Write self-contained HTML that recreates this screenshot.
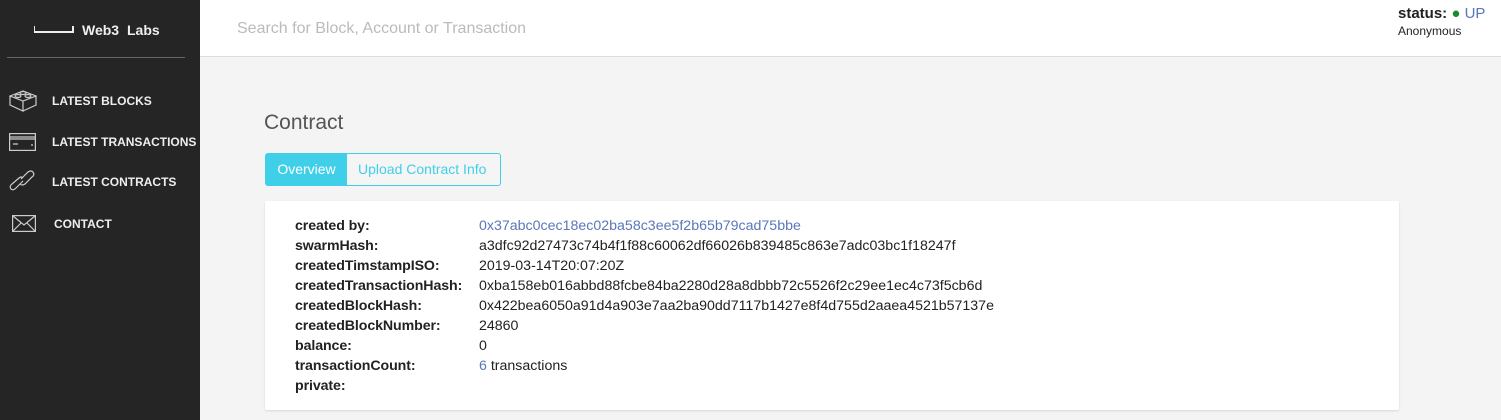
<!DOCTYPE html>
<html><head><style>
*{margin:0;padding:0;box-sizing:border-box}
body{width:1501px;height:420px;overflow:hidden;background:#f4f4f4;font-family:"Liberation Sans",sans-serif;position:relative}
#side{position:absolute;left:0;top:0;width:200px;height:420px;background:#252525;color:#fff}
#logo{position:absolute;left:82px;top:22px;font-weight:bold;font-size:14px;color:#eee;word-spacing:4px}
#logoline{position:absolute;left:34px;top:26px;width:40px;height:7px;border:2px solid #eee;border-top:none;border-left:1px solid #eee}
#hr{position:absolute;left:7px;top:57px;width:178px;height:1px;background:#666}
.nav{position:absolute;left:52px;font-size:12px;font-weight:bold;color:#eee}
.ic{position:absolute;left:9px}
#head{position:absolute;left:200px;top:0;right:0;height:57px;background:#fff;border-bottom:1px solid #ddd}
#search{position:absolute;left:37px;top:20px;font-size:16px;color:#bbb}
#status{position:absolute;left:1398px;top:5px;font-size:15px;font-weight:bold;color:#222}
#anon{position:absolute;left:1398px;top:24px;font-size:12px;color:#222}
h1{position:absolute;left:264px;top:111px;font-size:21px;font-weight:normal;color:#555}
#tabs{position:absolute;left:265px;top:153px;height:33px;width:236px;border:1px solid #40cfe9;border-radius:3px;background:#f5f5f5;font-size:14px}
#tabs .a{position:absolute;left:0;top:0;width:81px;height:31px;background:#40cfe9;color:#fff;line-height:31px;text-align:center}
#tabs .b{position:absolute;left:92px;top:0;line-height:31px;color:#40cfe9}
#card{position:absolute;left:265px;top:201px;width:1134px;height:209px;background:#fff;box-shadow:0 1px 2px rgba(0,0,0,.12);border-radius:2px}
.r{position:absolute;font-size:14.2px;line-height:17px;color:#222;white-space:nowrap}
.l{left:30px;font-weight:bold;letter-spacing:-0.1px}
.v{left:214px}
a{color:#5a77b8;text-decoration:none}
</style></head><body>
<div id="side">
<div id="logoline"></div><div id="logo">Web3 Labs</div>
<div id="hr"></div>
<svg class="ic" style="top:88px" width="28" height="24" viewBox="0 0 28 24" fill="none" stroke="#ccc" stroke-width="1.2"><path d="M1 8 L14 3 L27 8 L14 13 Z M1 8 V17 L14 23 V13 M27 8 V17 L14 23"/><ellipse cx="14" cy="5" rx="3" ry="1.5"/><ellipse cx="9" cy="8" rx="3" ry="1.5"/><ellipse cx="19" cy="8" rx="3" ry="1.5"/></svg>
<div class="nav" style="top:94px">LATEST BLOCKS</div>
<svg class="ic" style="top:133px" width="27" height="18" viewBox="0 0 27 18" fill="none" stroke="#ccc" stroke-width="1.2"><rect x="0.6" y="0.6" width="25.8" height="16.8"/><path d="M1 4H26M1 6H26M4 11H9M22 12H24"/></svg>
<div class="nav" style="top:135px">LATEST TRANSACTIONS</div>
<svg class="ic" style="top:170px" width="26" height="24" viewBox="0 0 26 24" fill="none" stroke="#ccc" stroke-width="1.2"><path d="M12 9 L19 2 Q22 0 24 2 Q26 5 23 7 L16 14 Q13 16 11 14 M14 11 L7 18 Q4 21 2 19 Q0 16 3 14 L10 8 Q12 6 14 8"/></svg>
<div class="nav" style="top:175px">LATEST CONTRACTS</div>
<svg class="ic" style="top:215px;left:12px" width="24" height="17" viewBox="0 0 24 17" fill="none" stroke="#ccc" stroke-width="1.2"><rect x="0.6" y="0.6" width="22.8" height="15.8"/><path d="M1 1 L12 10 L23 1 M1 16 L9 8 M23 16 L15 8"/></svg>
<div class="nav" style="top:217px;left:54px">CONTACT</div>
</div>
<div id="head"><div id="search">Search for Block, Account or Transaction</div></div>
<div id="status">status: <span style="color:#1a8a2a">●</span> <span style="color:#5a77b8;font-weight:normal">UP</span></div>
<div id="anon">Anonymous</div>
<h1>Contract</h1>
<div id="tabs"><div class="a">Overview</div><div class="b">Upload Contract Info</div></div>
<div id="card">
<div class="r l" style="top:17px">created by:</div><div class="r v" style="top:17px"><a>0x37abc0cec18ec02ba58c3ee5f2b65b79cad75bbe</a></div>
<div class="r l" style="top:37px">swarmHash:</div><div class="r v" style="top:37px">a3dfc92d27473c74b4f1f88c60062df66026b839485c863e7adc03bc1f18247f</div>
<div class="r l" style="top:57px">createdTimstampISO:</div><div class="r v" style="top:57px">2019-03-14T20:07:20Z</div>
<div class="r l" style="top:77px">createdTransactionHash:</div><div class="r v" style="top:77px">0xba158eb016abbd88fcbe84ba2280d28a8dbbb72c5526f2c29ee1ec4c73f5cb6d</div>
<div class="r l" style="top:97px">createdBlockHash:</div><div class="r v" style="top:97px">0x422bea6050a91d4a903e7aa2ba90dd7117b1427e8f4d755d2aaea4521b57137e</div>
<div class="r l" style="top:117px">createdBlockNumber:</div><div class="r v" style="top:117px">24860</div>
<div class="r l" style="top:137px">balance:</div><div class="r v" style="top:137px">0</div>
<div class="r l" style="top:157px">transactionCount:</div><div class="r v" style="top:157px"><a>6</a> transactions</div>
<div class="r l" style="top:177px">private:</div>
</div>
</body></html>
